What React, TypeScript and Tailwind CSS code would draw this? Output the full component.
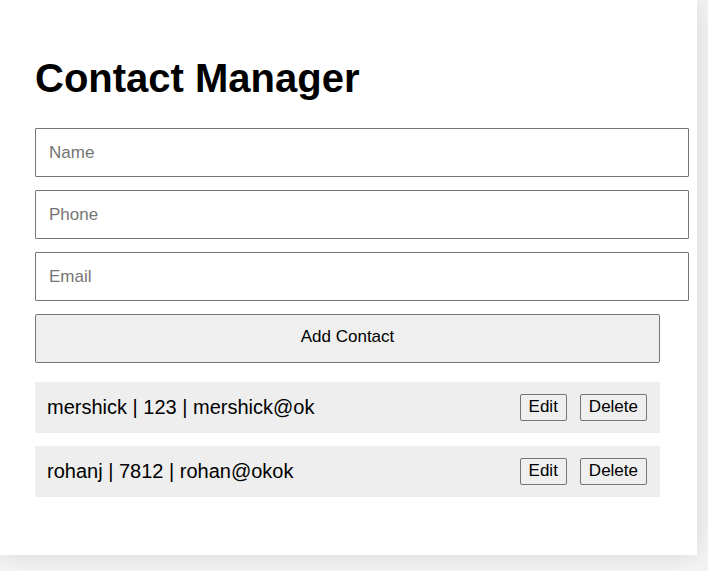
import { useState } from "react";

type Contact = { name: string; phone: string; email: string };

const fields = [
  { key: "name", label: "Name", type: "text" },
  { key: "phone", label: "Phone", type: "tel" },
  { key: "email", label: "Email", type: "email" },
] as const;

const emptyContact: Contact = { name: "", phone: "", email: "" };

export default function App() {
  const [draft, setDraft] = useState<Contact>(emptyContact);
  const [contacts, setContacts] = useState<Contact[]>([
    { name: "mershick", phone: "123", email: "mershick@ok" },
    { name: "rohanj", phone: "7812", email: "rohan@okok" },
  ]);

  const remove = (index: number) =>
    setContacts(contacts.filter((_, i) => i !== index));

  const edit = (index: number) => {
    setDraft(contacts[index]);
    remove(index);
  };

  return (
    <div className="min-h-screen overflow-hidden bg-[#f4f4f4] pr-[11px] pb-4 font-['Liberation_Sans',Arial,sans-serif] text-black">
      <main className="bg-white pt-[54px] pr-[37px] pb-[58px] pl-[35px] shadow-[0_0_25px_rgba(0,0,0,0.12)]">
        <h1 className="mb-[26px] text-[40px] leading-[48px] font-bold">Contact Manager</h1>
        <form
          className="flex flex-col gap-[13px]"
          onSubmit={(event) => {
            event.preventDefault();
            setContacts([...contacts, draft]);
            setDraft(emptyContact);
          }}
        >
          {fields.map(({ key, label, type }) => (
            <input
              key={key}
              type={type}
              aria-label={label}
              placeholder={label}
              value={draft[key]}
              onChange={(event) => setDraft({ ...draft, [key]: event.target.value })}
              className="-mr-[29px] h-[49px] rounded-[1px] border border-[#767676] bg-white px-[13px] text-[17px] placeholder:text-[#757575]"
            />
          ))}
          <button
            type="submit"
            className="h-[49px] rounded-xs border border-[#767676] bg-[#efefef] pb-1 text-[17px]"
          >
            Add Contact
          </button>
        </form>
        <ul className="mt-[19px] flex flex-col gap-[13px]">
          {contacts.map((contact, index) => (
            <li
              key={index}
              className="flex h-[51px] items-center justify-between bg-[#eeeeee] pr-[13px] pl-3 text-[20px]"
            >
              <span className="pb-0.5">
                {contact.name} | {contact.phone} | {contact.email}
              </span>
              <span className="flex gap-[13px] text-[17px] leading-[23px]">
                <button
                  type="button"
                  onClick={() => edit(index)}
                  className="rounded-xs border border-[#767676] bg-[#efefef] px-2 pb-0.5"
                >
                  Edit
                </button>
                <button
                  type="button"
                  onClick={() => remove(index)}
                  className="rounded-xs border border-[#767676] bg-[#efefef] px-2 pb-0.5"
                >
                  Delete
                </button>
              </span>
            </li>
          ))}
        </ul>
      </main>
    </div>
  );
}
